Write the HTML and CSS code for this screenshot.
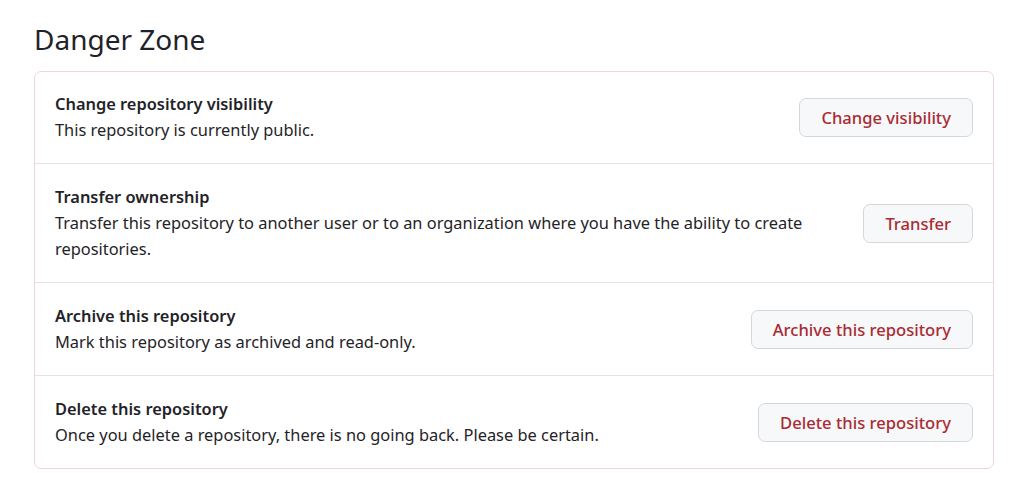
FILE: index.html
```html
<!DOCTYPE html>
<html>
<head>
<meta charset="utf-8">
<link rel="stylesheet" href="styles.css">
</head>
<body>
<div class="page">
  <h2 class="heading">Danger Zone</h2>
  <div class="box">
    <div class="row">
      <div class="info">
        <div class="title">Change repository visibility</div>
        <div class="desc">This repository is currently public.</div>
      </div>
      <button class="btn">Change visibility</button>
    </div>
    <div class="row">
      <div class="info">
        <div class="title">Transfer ownership</div>
        <div class="desc">Transfer this repository to another user or to an organization where you have the ability to create repositories.</div>
      </div>
      <button class="btn">Transfer</button>
    </div>
    <div class="row">
      <div class="info">
        <div class="title">Archive this repository</div>
        <div class="desc">Mark this repository as archived and read-only.</div>
      </div>
      <button class="btn">Archive this repository</button>
    </div>
    <div class="row">
      <div class="info">
        <div class="title">Delete this repository</div>
        <div class="desc">Once you delete a repository, there is no going back. Please be certain.</div>
      </div>
      <button class="btn">Delete this repository</button>
    </div>
  </div>
</div>
</body>
</html>
```
FILE: styles.css
```css
html, body {
  margin: 0;
  padding: 0;
  background: #ffffff;
}
body {
  font-family: "Noto Sans", "Open Sans", sans-serif;
  color: #1f2328;
}
.page {
  padding: 19px 22px 0 34px;
}
.heading {
  font-weight: 400;
  font-size: 28px;
  line-height: 40px;
  margin: 0 0 12px 0;
  color: #1f2328;
}
.box {
  border: 1px solid #efd6d6;
  border-radius: 7px;
}
.row {
  display: flex;
  align-items: center;
  gap: 40px;
  padding: 20px;
  border-top: 1px solid #e3e3e3;
  font-size: 16.4px;
  line-height: 26px;
}
.row:first-child {
  border-top: none;
  padding-top: 19px;
}
.info {
  flex: 1;
  min-width: 0;
}
.title {
  font-weight: 600;
  color: #1f2328;
}
.desc {
  color: #1f2328;
}
.btn {
  font-family: inherit;
  font-size: 16.6px;
  font-weight: 500;
  line-height: 25px;
  padding: 6px 21px;
  border: 1px solid #d5d8db;
  border-radius: 7px;
  background: #f6f8fa;
  color: #ab2b33;
  white-space: nowrap;
  cursor: pointer;
}
```
